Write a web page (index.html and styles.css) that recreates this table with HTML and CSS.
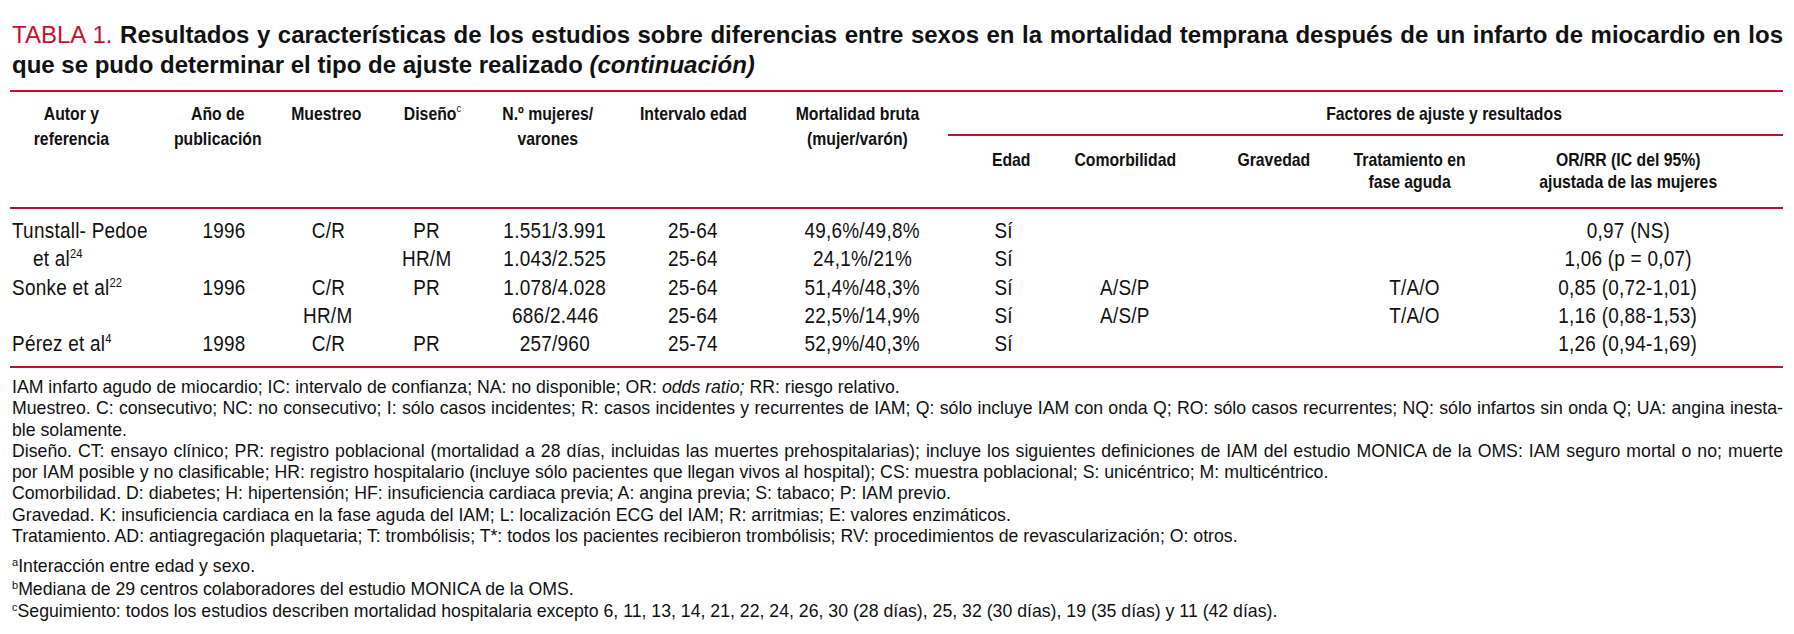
FILE: index.html
```html
<!DOCTYPE html>
<html lang="es">
<head>
<meta charset="utf-8">
<title>Tabla 1</title>
<link rel="stylesheet" href="styles.css">
</head>
<body>
<div class="sheet">
  <h1 class="title">
    <span class="tline full"><span class="tag">TABLA 1.</span> Resultados y características de los estudios sobre diferencias entre sexos en la mortalidad temprana después de un infarto de miocardio en los</span>
    <span class="tline">que se pudo determinar el tipo de ajuste realizado <em>(continuación)</em></span>
  </h1>

  <div class="thead">
    <div class="th span2 h1">Autor y<br>referencia</div>
    <div class="th span2 h2">Año de<br>publicación</div>
    <div class="th span2 h3">Muestreo</div>
    <div class="th span2 h4">Diseño<sup class="hsup">c</sup></div>
    <div class="th span2 h5">N.º mujeres/<br>varones</div>
    <div class="th span2 h6">Intervalo edad</div>
    <div class="th span2 h7">Mortalidad bruta<br>(mujer/varón)</div>
    <div class="group"><span class="gtext">Factores de ajuste y resultados</span></div>
    <div class="th sub h8">Edad</div>
    <div class="th sub h9">Comorbilidad</div>
    <div class="th sub h10">Gravedad</div>
    <div class="th sub h11">Tratamiento en<br>fase aguda</div>
    <div class="th sub h12">OR/RR (IC del 95%)<br>ajustada de las mujeres</div>
  </div>

  <div class="tbody">
    <span>Tunstall- Pedoe</span><span>1996</span><span>C/R</span><span>PR</span><span>1.551/3.991</span><span>25-64</span><span>49,6%/49,8%</span><span>Sí</span><span></span><span></span><span></span><span>0,97 (NS)</span>
    <span class="indent">et al<sup class="bsup">24</sup></span><span></span><span></span><span>HR/M</span><span>1.043/2.525</span><span>25-64</span><span>24,1%/21%</span><span>Sí</span><span></span><span></span><span></span><span>1,06 (p = 0,07)</span>
    <span>Sonke et al<sup class="bsup">22</sup></span><span>1996</span><span>C/R</span><span>PR</span><span>1.078/4.028</span><span>25-64</span><span>51,4%/48,3%</span><span>Sí</span><span>A/S/P</span><span></span><span>T/A/O</span><span>0,85 (0,72-1,01)</span>
    <span></span><span></span><span>HR/M</span><span></span><span>686/2.446</span><span>25-64</span><span>22,5%/14,9%</span><span>Sí</span><span>A/S/P</span><span></span><span>T/A/O</span><span>1,16 (0,88-1,53)</span>
    <span>Pérez et al<sup class="bsup">4</sup></span><span>1998</span><span>C/R</span><span>PR</span><span>257/960</span><span>25-74</span><span>52,9%/40,3%</span><span>Sí</span><span></span><span></span><span></span><span>1,26 (0,94-1,69)</span>
  </div>

  <div class="notes">
    <p class="nl">IAM infarto agudo de miocardio; IC: intervalo de confianza; NA: no disponible; OR: <i>odds ratio;</i> RR: riesgo relativo.</p>
    <p class="nl full">Muestreo. C: consecutivo; NC: no consecutivo; I: sólo casos incidentes; R: casos incidentes y recurrentes de IAM; Q: sólo incluye IAM con onda Q; RO: sólo casos recurrentes; NQ: sólo infartos sin onda Q; UA: angina inesta-</p>
    <p class="nl">ble solamente.</p>
    <p class="nl full">Diseño. CT: ensayo clínico; PR: registro poblacional (mortalidad a 28 días, incluidas las muertes prehospitalarias); incluye los siguientes definiciones de IAM del estudio MONICA de la OMS: IAM seguro mortal o no; muerte</p>
    <p class="nl">por IAM posible y no clasificable; HR: registro hospitalario (incluye sólo pacientes que llegan vivos al hospital); CS: muestra poblacional; S: unicéntrico; M: multicéntrico.</p>
    <p class="nl">Comorbilidad. D: diabetes; H: hipertensión; HF: insuficiencia cardiaca previa; A: angina previa; S: tabaco; P: IAM previo.</p>
    <p class="nl">Gravedad. K: insuficiencia cardiaca en la fase aguda del IAM; L: localización ECG del IAM; R: arritmias; E: valores enzimáticos.</p>
    <p class="nl">Tratamiento. AD: antiagregación plaquetaria; T: trombólisis; T*: todos los pacientes recibieron trombólisis; RV: procedimientos de revascularización; O: otros.</p>
    <p class="nl sl first-sup"><sup class="nsup">a</sup>Interacción entre edad y sexo.</p>
    <p class="nl sl"><sup class="nsup">b</sup>Mediana de 29 centros colaboradores del estudio MONICA de la OMS.</p>
    <p class="nl sl"><sup class="nsup">c</sup>Seguimiento: todos los estudios describen mortalidad hospitalaria excepto 6, 11, 13, 14, 21, 22, 24, 26, 30 (28 días), 25, 32 (30 días), 19 (35 días) y 11 (42 días).</p>
  </div>
</div>
</body>
</html>
```

FILE: styles.css
```css
html, body {
  margin: 0;
  padding: 0;
  background: #ffffff;
}

body {
  color: #111111;
  font-family: "Liberation Sans", Arial, sans-serif;
}

.sheet {
  margin-left: 10px;
  width: 1773px;
}

/* ---------- title ---------- */
.title {
  margin: 0;
  padding: 20px 0 10px 2px;
  font-size: 24px;
  line-height: 30px;
  font-weight: bold;
  color: #111111;
  border-bottom: 2px solid #c8102e;
}

.tline {
  display: block;
  white-space: nowrap;
}

.tline.full {
  text-align: justify;
  text-align-last: justify;
}

.tag {
  color: #c8102e;
  font-weight: normal;
}

.title em {
  font-style: italic;
}

/* ---------- shared grid ---------- */
.thead,
.tbody {
  display: grid;
  grid-template-columns: 134.5px 128px 107px 110.5px 130.5px 156px 171.5px 119px 132.5px 144.5px 140px 299px;
}

/* ---------- header ---------- */
.thead {
  padding-top: 9px;
  border-bottom: 2px solid #b3162d;
  font-family: "Liberation Sans", Arial, sans-serif;
  font-weight: bold;
  font-size: 19px;
  line-height: 25px;
}

.th {
  justify-self: center;
  text-align: center;
  white-space: nowrap;
  transform: scaleX(0.83);
}

.span2 {
  grid-row: 1 / span 2;
  align-self: start;
}

.group {
  grid-column: 8 / span 5;
  grid-row: 1;
  padding-left: 157px;
  padding-bottom: 8px;
  text-align: center;
  border-bottom: 2px solid #b3162d;
}

.gtext {
  display: inline-block;
  white-space: nowrap;
  transform: scaleX(0.83);
}

.sub {
  padding-top: 13px;
  padding-bottom: 14px;
  line-height: 22px;
}

.h1 { margin-right: 12.5px; }
.h2 { margin-left: 19px; }
.h4 { margin-right: 5.5px; }
.h5 { margin-right: 14.5px; }
.h6 { margin-right: 11px; }
.h7 { margin-right: 10px; }
.h8 { margin-left: 7px; }
.h9 { margin-right: 16px; }
.h10 { margin-left: 4px; }
.h11 { margin-right: 8px; }
.h12 { margin-right: 11px; }

.hsup {
  font-size: 11px;
  line-height: 0;
  vertical-align: 8px;
  font-weight: normal;
}

/* ---------- body ---------- */
.tbody {
  grid-auto-rows: 28.25px;
  padding-top: 8px;
  padding-bottom: 7.75px;
  border-bottom: 2px solid #b3162d;
  font-size: 22px;
  line-height: 28.25px;
  letter-spacing: 0.3px;
}

.tbody > span {
  justify-self: center;
  white-space: nowrap;
  transform: scaleX(0.86);
}

.tbody > span:nth-child(12n+1) {
  justify-self: start;
  margin-left: 2px;
  transform-origin: left center;
}
.tbody > span.indent { margin-left: 23px; }
.tbody > span:nth-child(12n+2) { margin-left: 31px; }
.tbody > span:nth-child(12n+3) { margin-left: 4px; }
.tbody > span:nth-child(12n+4) { margin-right: 15.5px; }
.tbody > span:nth-child(12n+6) { margin-right: 11px; }
.tbody > span:nth-child(12n+8) { margin-right: 8px; }
.tbody > span:nth-child(12n+9) { margin-right: 16px; }
.tbody > span:nth-child(12n+12) { margin-right: 11px; }

.bsup {
  font-size: 13px;
  line-height: 0;
  vertical-align: 8px;
  letter-spacing: 0;
}

/* ---------- notes ---------- */
.notes {
  padding: 9px 0 0 2px;
  font-size: 17.7px;
  line-height: 21.3px;
}

.nl {
  margin: 0;
  white-space: nowrap;
}

.nl.full {
  text-align: justify;
  text-align-last: justify;
}

.nl.sl {
  line-height: 22.5px;
}

.first-sup {
  margin-top: 8px;
}

.nsup {
  font-size: 11px;
  line-height: 0;
  vertical-align: 6px;
}
```
